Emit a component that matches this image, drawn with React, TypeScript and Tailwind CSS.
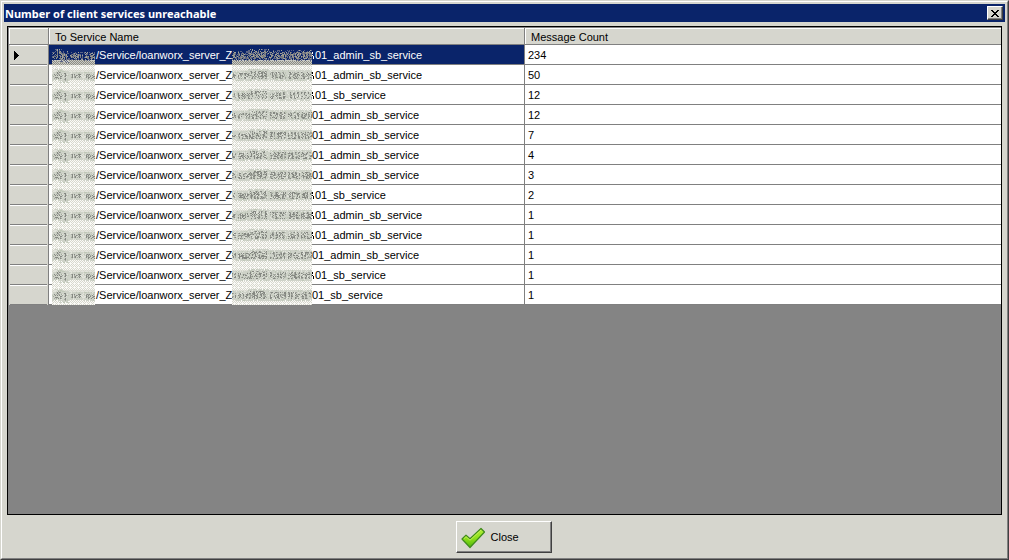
import React from "react";

type Service = { suffix: string; cut: boolean; count: number };

const SERVICES: Service[] = [
  { suffix: "01_admin_sb_service", cut: true, count: 234 },
  { suffix: "01_admin_sb_service", cut: true, count: 50 },
  { suffix: "01_sb_service", cut: true, count: 12 },
  { suffix: "01_admin_sb_service", cut: false, count: 12 },
  { suffix: "01_admin_sb_service", cut: false, count: 7 },
  { suffix: "01_admin_sb_service", cut: false, count: 4 },
  { suffix: "01_admin_sb_service", cut: false, count: 3 },
  { suffix: "01_sb_service", cut: true, count: 2 },
  { suffix: "01_admin_sb_service", cut: true, count: 1 },
  { suffix: "01_admin_sb_service", cut: true, count: 1 },
  { suffix: "01_admin_sb_service", cut: false, count: 1 },
  { suffix: "01_sb_service", cut: true, count: 1 },
  { suffix: "01_sb_service", cut: false, count: 1 },
];

function random(seed: number) {
  let s = seed * 7919 + 17;
  return () => {
    s = (s * 1103515245 + 12345) % 2147483648;
    return s / 2147483648;
  };
}

// Runs of smeared strokes: [start, end, top, bottom].
const HOST_RUNS = [[1, 5, 9, 13], [5, 9, 6, 13], [9, 15, 8, 15], [19, 29, 9, 12], [34, 43, 9, 13]];
const NAME_RUNS = [[0, 4, 8, 12], [6, 18, 8, 13], [18, 35, 6, 13], [38, 54, 7, 13], [56, 68, 7, 13], [69, 80, 7, 13]];

// Dithered smudge that hides part of a service name.
function Smudge({ width, seed, selected }: { width: number; seed: number; selected: boolean }) {
  const rnd = random(seed);
  const runs = width < 60 ? HOST_RUNS : NAME_RUNS;
  let haze = "";
  let dots = "";
  let light = "";
  let ink = "";
  let dark = "";
  for (let y = 0; y < 20; y++) {
    for (let x = 0; x < width; x++) {
      const px = `M${x} ${y}h1v1h-1z`;
      const checker = (x + y) % 2 === 0;
      const nearRun = runs.some(([a, b, t, u]) => x >= a - 2 && x < b + 2 && y >= t - 2 && y <= u + 2);
      const run = runs.find(([a, b, t, u]) => x >= a && x < b && y >= t && y <= u);
      const r = rnd();
      if (nearRun) {
        if (r < (selected ? 0.35 : 0.85)) haze += px;
      } else if (selected ? y > 14 && checker : checker && (y % 4 !== 2 || x % 4 < 2)) {
        dots += px;
      }
      const column = (x * 5 + seed) % 7 < 4;
      if (run && rnd() < (column ? 0.65 : 0.25)) {
        if (rnd() < 0.4) ink += px;
        else dark += px;
      } else if (nearRun && rnd() < 0.12) {
        light += px;
      }
    }
  }
  return (
    <svg
      className="h-5 shrink-0"
      width={width}
      height="20"
      viewBox={`0 0 ${width} 20`}
      shapeRendering="crispEdges"
      aria-hidden="true"
    >
      <rect width={width} height="20" fill={selected ? "#0a246a" : "#fafaf7"} />
      {selected && <rect y="15" width={width} height="5" fill="#c9cac4" />}
      {!selected && <rect y="5" width={width} height="10" fill="#e2e4dc" />}
      <path d={dots} fill={selected ? "#8c8c84" : "#d8d8ce"} />
      <path d={haze} fill={selected ? "#5b6485" : "#ced2c8"} />
      <path d={light} fill={selected ? "#a5a69c" : "#c0c8b8"} />
      <path d={ink} fill={selected ? "#9a9a90" : "#a3a79f"} />
      <path d={dark} fill={selected ? "#7c7e80" : "#858882"} />
    </svg>
  );
}

function ServiceRow({ service, index }: { service: Service; index: number }) {
  const selected = index === 0;
  return (
    <tr className="h-5">
      <th
        scope="row"
        aria-label={`Row ${index + 1}`}
        className="border-r border-r-[#808080] bg-[#d6d6ce] p-0"
      >
        <div className="mx-px flex h-5 items-center border-b border-b-[#808080] border-t border-t-white pl-1">
          {selected && (
            <svg className="h-[9px] w-[5px]" viewBox="0 0 5 9" shapeRendering="crispEdges" aria-hidden="true">
              <path d="M0 0h1v1h1v1h1v1h1v1h1v1h-1v1h-1v1h-1v1h-1v1h-1z" fill="#000" />
            </svg>
          )}
        </div>
      </th>
      <td
        className={
          selected
            ? "border-r border-r-[#808080] bg-[#0a246a] p-0 text-white shadow-[inset_0_-1px_0_#808080]"
            : "border-r border-r-[#808080] bg-white p-0 shadow-[inset_0_-1px_0_#808080]"
        }
      >
        <div className="flex h-5 items-center overflow-hidden whitespace-nowrap pl-[3px]">
          <Smudge width={43} seed={selected ? 3 : 5} selected={selected} />
          <span className="w-[137px] shrink-0 pl-px">/Service/loanworx_server_Z</span>
          <Smudge width={80} seed={index + 11} selected={selected} />
          {service.cut && (
            <svg className="h-2 w-[3px] shrink-0" viewBox="0 0 3 8" shapeRendering="crispEdges" aria-hidden="true">
              <path d="M0 1h1v2h-1zM0 4h1v1h-1zM1 5h1v3h-1z" fill="currentColor" />
            </svg>
          )}
          <span>{service.suffix}</span>
        </div>
      </td>
      <td className="bg-white p-0 pl-[3px] shadow-[inset_0_-1px_0_#808080]">{service.count}</td>
    </tr>
  );
}

export default function App() {
  return (
    <main className="flex min-h-screen flex-col border border-b-[#404040] border-l-[#d6d6ce] border-r-[#404040] border-t-[#d6d6ce] bg-[#d6d6ce] font-['Liberation_Sans',Arial,sans-serif] text-[11px] leading-[13px] text-black">
      <div className="flex flex-1 flex-col border border-b-[#808080] border-l-white border-r-[#808080] border-t-white p-0.5">
        <header className="flex h-[18px] items-center justify-between bg-[#0a246a] pl-px pr-0.5">
          <h1 className="font-['Noto_Sans',Tahoma,sans-serif] text-[11px] font-bold text-white">
            Number of client services unreachable
          </h1>
          <button
            type="button"
            aria-label="Close window"
            className="flex h-[14px] w-4 items-center justify-center border border-b-[#404040] border-l-white border-r-[#404040] border-t-white bg-[#d6d6ce] shadow-[inset_-1px_-1px_0_#808080]"
          >
            <svg className="h-[7px] w-2" viewBox="0 0 8 7" shapeRendering="crispEdges" aria-hidden="true">
              <path
                d="M0 0h2v1h1v1h2v-1h1v-1h2v1h-1v1h-1v1h-1v1h1v1h1v1h1v1h-2v-1h-1v-1h-2v1h-1v1h-2v-1h1v-1h1v-1h1v-1h-1v-1h-1v-1h-1z"
                fill="#000"
              />
            </svg>
          </button>
        </header>

        <section className="mx-[3px] mt-1 flex-1 border border-black bg-[#848484] pl-px pt-px">
          <table className="w-full table-fixed border-separate border-spacing-0 text-left">
            <colgroup>
              <col className="w-10" />
              <col className="w-[476px]" />
              <col />
            </colgroup>
            <thead>
              <tr className="h-[17px]">
                <td className="border-b border-r border-[#808080] bg-[#d6d6ce] p-0 shadow-[inset_1px_1px_0_#fff]" />
                <th
                  scope="col"
                  className="border-b border-r border-[#808080] bg-[#d6d6ce] p-0 pl-1.5 pt-0.5 font-normal shadow-[inset_1px_1px_0_#fff]"
                >
                  To Service Name
                </th>
                <th
                  scope="col"
                  className="border-b border-[#808080] bg-[#d6d6ce] p-0 pl-1.5 pt-0.5 font-normal shadow-[inset_1px_1px_0_#fff]"
                >
                  Message Count
                </th>
              </tr>
            </thead>
            <tbody>
              {SERVICES.map((service, i) => (
                <ServiceRow key={i} service={service} index={i} />
              ))}
            </tbody>
          </table>
        </section>

        <footer className="flex justify-center pb-[3px] pr-0.5 pt-1.5">
          <button
            type="button"
            className="flex h-8 w-24 items-center border border-b-[#404040] border-l-white border-r-[#404040] border-t-white bg-[#d6d6ce] pl-1 shadow-[inset_-1px_-1px_0_#808080]"
          >
            <svg className="h-6 w-6" viewBox="0 0 24 24" aria-hidden="true">
              <defs>
                <linearGradient id="tick" x1="0" y1="0" x2="0" y2="1">
                  <stop offset="0" stopColor="#b4ee3c" />
                  <stop offset="0.5" stopColor="#8fe01c" />
                  <stop offset="1" stopColor="#4fb80c" />
                </linearGradient>
              </defs>
              <path
                d="M1 14L5 10.2L9 13.8L20 3.5L23.5 7L9 22.5Z"
                fill="url(#tick)"
                stroke="#3f8a1c"
                strokeWidth="1.2"
                strokeLinejoin="round"
              />
              <path d="M2.8 13.8L5 11.7L9 15.2L20 5" fill="none" stroke="#c8f25c" strokeWidth="0.9" />
            </svg>
            <span className="ml-1.5">Close</span>
          </button>
        </footer>
      </div>
    </main>
  );
}
